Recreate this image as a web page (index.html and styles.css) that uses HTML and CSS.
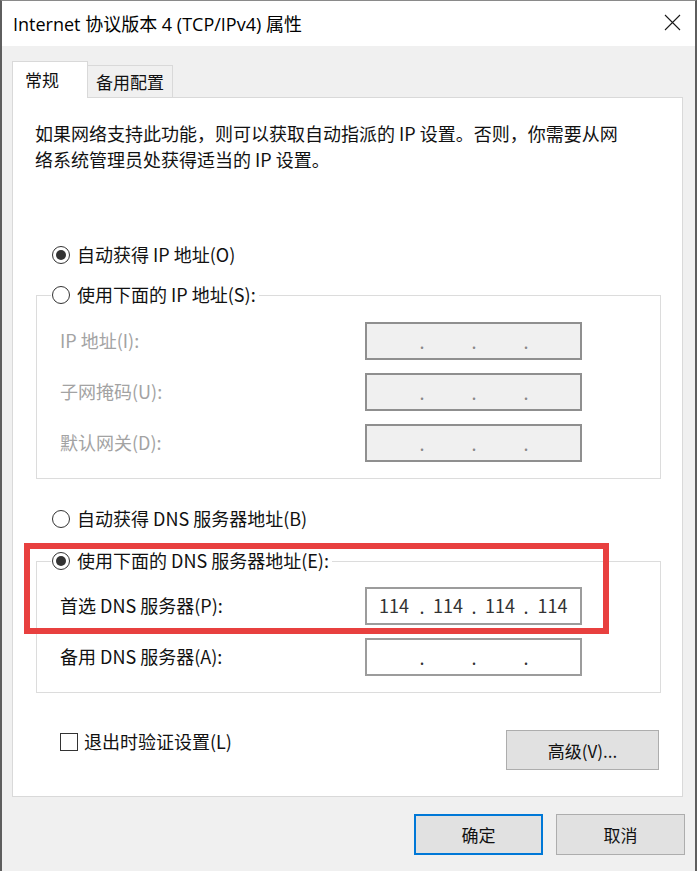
FILE: index.html
```html
<!DOCTYPE html>
<html lang="zh-CN">
<head>
<meta charset="utf-8">
<title>Internet 协议版本 4 (TCP/IPv4) 属性</title>
<link rel="stylesheet" href="styles.css">
</head>
<body>
<div class="window">
  <div class="titlebar">
    <span class="title">Internet 协议版本 4 (TCP/IPv4) 属性</span>
    <svg class="close" width="17" height="17" viewBox="0 0 17 17"><path d="M1 1 L16 16 M16 1 L1 16" stroke="#1a1a1a" stroke-width="1.1" fill="none"/></svg>
  </div>
  <div class="body">
    <div class="tabs">
      <div class="tab active">常规</div>
      <div class="tab">备用配置</div>
    </div>
    <div class="panel">
      <p class="desc">如果网络支持此功能，则可以获取自动指派的 IP 设置。否则，你需要从网<br>络系统管理员处获得适当的 IP 设置。</p>

      <div class="radio-row first"><span class="radio checked"></span><span>自动获得 IP 地址(O)</span></div>

      <fieldset class="group g1">
        <legend><span class="radio-row"><span class="radio"></span><span>使用下面的 IP 地址(S):</span></span></legend>
        <div class="field disabled"><span class="label">IP 地址(I):</span><span class="ipbox off"><i></i><b>.</b><i></i><b>.</b><i></i><b>.</b><i></i></span></div>
        <div class="field disabled"><span class="label">子网掩码(U):</span><span class="ipbox off"><i></i><b>.</b><i></i><b>.</b><i></i><b>.</b><i></i></span></div>
        <div class="field disabled"><span class="label">默认网关(D):</span><span class="ipbox off"><i></i><b>.</b><i></i><b>.</b><i></i><b>.</b><i></i></span></div>
      </fieldset>

      <div class="radio-row dns-auto"><span class="radio"></span><span>自动获得 DNS 服务器地址(B)</span></div>

      <fieldset class="group g2">
        <legend><span class="radio-row"><span class="radio checked"></span><span>使用下面的 DNS 服务器地址(E):</span></span></legend>
        <div class="field"><span class="label">首选 DNS 服务器(P):</span><span class="ipbox"><i>114</i><b>.</b><i>114</i><b>.</b><i>114</i><b>.</b><i>114</i></span></div>
        <div class="field"><span class="label">备用 DNS 服务器(A):</span><span class="ipbox"><i></i><b>.</b><i></i><b>.</b><i></i><b>.</b><i></i></span></div>
      </fieldset>

      <div class="bottom-row">
        <div class="check-row"><span class="checkbox"></span><span>退出时验证设置(L)</span></div>
        <button class="btn adv">高级(V)...</button>
      </div>
    </div>
    <div class="actions">
      <button class="btn primary">确定</button>
      <button class="btn">取消</button>
    </div>
  </div>
  <div class="highlight"></div>
</div>
</body>
</html>
```

FILE: styles.css
```css
* { box-sizing: border-box; }
html, body { margin: 0; padding: 0; }
body {
  font-family: "Noto Sans CJK SC", sans-serif;
  font-size: 18px;
  color: #111;
  background: #f0f0f0;
}
.window {
  position: relative;
  width: 697px;
  height: 871px;
  border-left: 2px solid #5e5e5e;
  border-right: 2px solid #5e5e5e;
  border-top: 1px solid #8a8a8a;
  background: #f0f0f0;
}
.titlebar {
  height: 45px;
  background: #fff;
  display: flex;
  align-items: center;
  justify-content: space-between;
  padding: 0 14px 0 11px;
}
.title {
  font-family: "Open Sans", "Noto Sans CJK SC", sans-serif;
  font-size: 18px;
  color: #000;
  margin-top: -2px;
}
.close { margin-top: -3px; }
.body {
  padding: 15px 10px 0 10px;
}
.tabs {
  display: flex;
  align-items: flex-end;
  height: 37px;
  margin-bottom: -1px;
  position: relative;
  z-index: 1;
}
.tab {
  height: 33px;
  width: 85px;
  border: 1px solid #d9d9d9;
  border-left: none;
  background: #f0f0f0;
  font-size: 17px;
  line-height: 32px;
  text-align: center;
  color: #111;
}
.tab.active {
  height: 37px;
  width: 76px;
  background: #fff;
  border-left: 1px solid #d9d9d9;
  border-bottom: none;
  text-align: left;
  padding-left: 12px;
  line-height: 36px;
}
.panel {
  width: 671px;
  height: 700px;
  background: #fff;
  border: 1px solid #d9d9d9;
  padding: 0;
}
.desc {
  margin: 22px 0 0 22px;
  line-height: 26px;
  font-size: 18px;
}
.radio-row {
  display: flex;
  align-items: center;
  height: 26px;
  line-height: 26px;
  white-space: nowrap;
}
.radio-row.first { margin: 70px 0 0 39px; }
.radio-row.dns-auto { margin: 27px 0 0 39px; }
.radio-row > span:last-child { margin-top: -2px; }
.radio {
  width: 18px;
  height: 18px;
  border: 1px solid #333;
  border-radius: 50%;
  margin-right: 7px;
  flex: none;
  display: flex;
  align-items: center;
  justify-content: center;
  background: #fff;
}
.radio.checked::after {
  content: "";
  width: 10px;
  height: 10px;
  border-radius: 50%;
  background: #333;
}
.group {
  margin: 14px 0 0 23px;
  width: 625px;
  border: 1px solid #dcdcdc;
  padding: 14px 0 16px 14px;
  display: flex;
  flex-direction: column;
  gap: 13px;
}
.group.g2 { margin-top: 16px; padding-top: 13px; }
.group legend {
  padding: 0 3px 0 1px;
  margin: 0;
}
.field {
  display: flex;
  align-items: center;
  padding-left: 9px;
  height: 38px;
}
.label {
  width: 305px;
  flex: none;
  margin-top: -2px;
}
.field.disabled .label { color: #a3a3a3; }
.ipbox {
  width: 217px;
  height: 38px;
  border: 2px solid #9c9c9c;
  background: #fff;
  display: flex;
  align-items: center;
  font-size: 18px;
  color: #333;
}
.ipbox.off { background: #f0f0f0; border-color: #8f8f8f; }
.ipbox i {
  font-style: normal;
  width: 50px;
  text-align: center;
  flex: none;
  margin-top: -2px;
}
.ipbox i:first-child { width: 54px; }
.ipbox i:last-child { width: 51px; }
.ipbox b {
  font-weight: normal;
  width: 2px;
  display: flex;
  justify-content: center;
  flex: none;
  line-height: 1;
  margin-top: 0;
}
.ipbox.off b { color: #888; }
.bottom-row {
  display: flex;
  justify-content: space-between;
  align-items: flex-start;
  margin-top: 37px;
  padding: 0 23px 0 47px;
}
.check-row {
  display: flex;
  align-items: center;
  height: 26px;
  margin-top: -1px;
}
.check-row > span:last-child { margin-top: -2px; }
.checkbox {
  width: 18px;
  height: 18px;
  border: 1px solid #333;
  margin-right: 6px;
  background: #fff;
}
.btn {
  font-family: "Noto Sans CJK SC", sans-serif;
  font-size: 17px;
  color: #111;
  background: #e1e1e1;
  border: 1px solid #adadad;
  width: 129px;
  height: 41px;
  padding: 0;
  margin: 0;
}
.btn.adv { width: 153px; height: 40px; }
.btn.primary { border: 2px solid #0078d7; }
.actions {
  display: flex;
  justify-content: flex-end;
  gap: 13px;
  margin: 17px 0 0 0;
}
.highlight {
  position: absolute;
  left: 22px;
  top: 542px;
  width: 585px;
  height: 91px;
  border: 6px solid #e8403f;
  pointer-events: none;
}
```
